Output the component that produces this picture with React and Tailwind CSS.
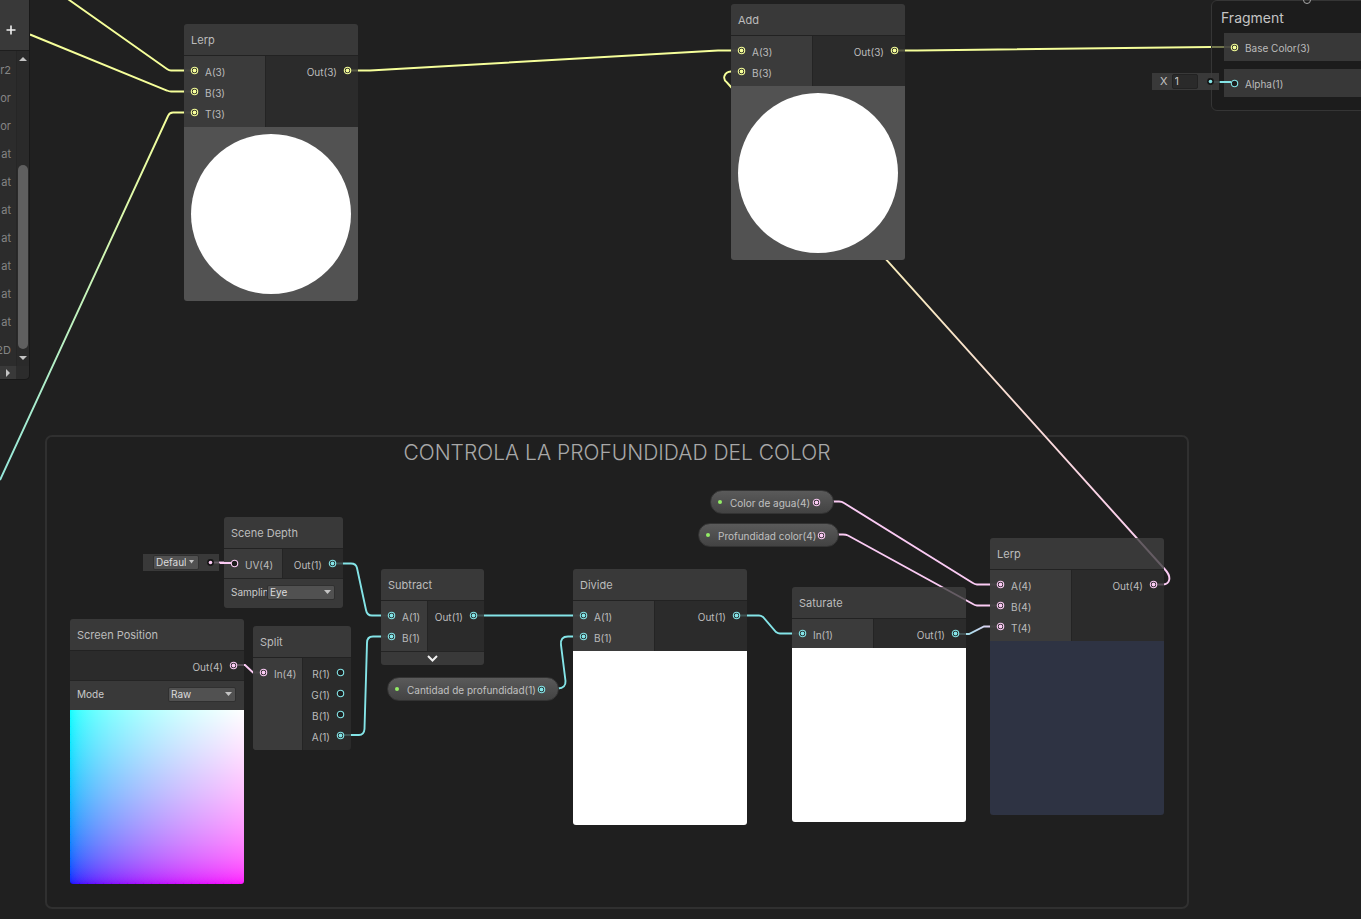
import React from "react";

const AQUA = "#84e4e7";
const PINK = "#fbcbf4";
const YELLOW = "#f6ff9a";

function Port({ color, filled = true, plain = false }) {
  return (
    <svg className="h-[9px] w-[9px] shrink-0" viewBox="0 0 9 9" aria-hidden="true">
      {plain ? (
        <>
          <circle cx="4.5" cy="4.5" r="3.4" fill="#151515" />
          <circle cx="4.5" cy="4.5" r="1.8" fill={color} />
        </>
      ) : (
        <>
          <circle cx="4.5" cy="4.5" r="3.2" fill="#1d1d1d" stroke={color} strokeWidth="1.1" />
          {filled && <circle cx="4.5" cy="4.5" r="1.9" fill={color} />}
        </>
      )}
    </svg>
  );
}

function Input({ label, color, filled }) {
  return (
    <li className="flex h-[21px] items-center gap-1.5 pl-1.5">
      <Port color={color} filled={filled} />
      <span className="mt-[3px]">{label}</span>
    </li>
  );
}

function Output({ label, color, filled }) {
  return (
    <li className="flex h-[21px] items-center justify-end gap-1.5 pr-1.5">
      <span className="mt-[3px]">{label}</span>
      <Port color={color} filled={filled} />
    </li>
  );
}

function Node({ title, className, inputs = [], outputs = [], inputClass = "w-[82px]", children }) {
  return (
    <section className={`absolute overflow-hidden rounded-[3px] text-[10px] text-[#bcbcbc] ${className}`}>
      <h2 className="flex h-[31px] items-center bg-[#404040]/80 px-[7px] pt-0.5 text-[11px]">{title}</h2>
      <div className="flex border-t border-[#222222] bg-[#2e2e2e]/80">
        {inputs.length > 0 && (
          <ul className={`shrink-0 border-r border-[#242424] bg-[#404040]/80 py-1 ${inputClass}`}>
            {inputs.map((p) => (
              <Input key={p.label} {...p} />
            ))}
          </ul>
        )}
        <ul className="grow py-1">
          {outputs.map((p) => (
            <Output key={p.label} {...p} />
          ))}
        </ul>
      </div>
      {children}
    </section>
  );
}

function Dropdown({ id, label, value, className, tight = false }) {
  return (
    <span className={`relative flex h-[15px] shrink-0 ${className}`}>
      <select
        id={id}
        aria-label={label}
        className={`h-full w-full appearance-none overflow-hidden rounded-[2px] border border-[#303030] bg-[#515151] pl-0.5 text-[10px] leading-[13px] text-[#dcdcdc] outline-none ${tight ? "pr-3" : "pr-4"}`}
      >
        <option>{value}</option>
      </select>
      <svg
        className="pointer-events-none absolute top-[5px] right-1 h-1 w-[7px]"
        viewBox="0 0 7 4"
        aria-hidden="true"
      >
        <path d={tight ? "M1 0H6L3.5 3.5Z" : "M0 0H7L3.5 4Z"} fill="#c4c4c4" />
      </svg>
    </span>
  );
}

function OptionRow({ id, label, value }) {
  return (
    <div className="flex h-[30px] items-center border-t border-[#242424] bg-[#404040]/80 pr-2 pb-0.5 pl-[7px]">
      <label htmlFor={id} className="min-w-0 grow whitespace-nowrap text-[#cacaca]">
        {label}
      </label>
      <Dropdown id={id} value={value} className="w-[68px]" />
    </div>
  );
}

function SpherePreview() {
  return (
    <div className="h-[174px] bg-[#525252] p-[7px]">
      <div className="h-full w-full rounded-full bg-white" />
    </div>
  );
}

function PropertyPill({ label, color, className }) {
  return (
    <div
      className={`absolute flex h-[24px] items-center rounded-full border border-[#333333] bg-linear-to-b from-[#5a5a5a] to-[#434343] pr-3 pl-[7px] text-[10px] whitespace-nowrap text-[#c0c0c0] ${className}`}
    >
      <span className="mr-2 h-1 w-1 rounded-full bg-[#93ed66]" />
      <span className="mt-[3px] grow">{label}</span>
      <Port color={color} />
    </div>
  );
}

function Edges() {
  return (
    <svg className="absolute inset-0 h-full w-full" fill="none" strokeWidth="1.9" aria-hidden="true">
      <defs>
        <linearGradient id="aqua-yellow" gradientUnits="userSpaceOnUse" x1="-30" y1="545" x2="172" y2="112">
          <stop offset="0" stopColor={AQUA} />
          <stop offset="1" stopColor={YELLOW} />
        </linearGradient>
        <linearGradient id="yellow-pink" gradientUnits="userSpaceOnUse" x1="741" y1="72" x2="1153" y2="584">
          <stop offset="0" stopColor={YELLOW} />
          <stop offset="1" stopColor={PINK} />
        </linearGradient>
        <linearGradient id="aqua-pink" gradientUnits="userSpaceOnUse" x1="955" y1="634" x2="1000" y2="627">
          <stop offset="0" stopColor={AQUA} />
          <stop offset="1" stopColor={PINK} />
        </linearGradient>
      </defs>
      <g stroke={YELLOW}>
        <path d="M65 -3L167 69Q169 70.500 171 70.500H194" />
        <path d="M30 34.500L167 90.500Q169 91.500 171 91.500H194" />
        <path d="M347 70.500H370L718 50.500H741" />
        <path d="M894 50.500H917L1211 47H1234" />
      </g>
      <path stroke="url(#aqua-yellow)" d="M0 480L168 116Q169.500 112.500 173 112.500H194" />
      <path
        stroke="url(#yellow-pink)"
        d="M741 71.500H731C724 72 722 79 727 82.500L731 87L1165 569.500C1172 577 1170 584 1163 584.500H1153"
      />
      <g stroke={PINK}>
        <path d="M816 501.500H839Q842 501.500 844 503L972 582.500Q975 584.500 977 584.500H1000" />
        <path d="M822 534.500H843Q846 534.500 848 535.500L972 603.500Q975 605.500 977 605.500H1000" />
        <path d="M233 665H245L253 672.500H263" />
        <path d="M211 562.500H234" />
      </g>
      <g stroke={AQUA}>
        <path d="M332 563.500H351Q356 563.500 357 568L366 610Q367 615.500 372 615.500H391" />
        <path d="M340 735H359Q364 735 364.500 729L367 643Q367 636.500 373 636.500H391" />
        <path d="M473 615.500H584" />
        <path d="M542 688.500H558Q566 688 565.500 681L561 645Q560 636.500 568 636.500H584" />
        <path d="M737 615.500H759Q761 615.500 763 617L776 632Q778 633.500 780 633.500H802" />
        <path d="M1210 82H1234" />
      </g>
      <path stroke="url(#aqua-pink)" d="M955 634H969L984 626.500H1000" />
    </svg>
  );
}

function DefaultValueEdges() {
  return (
    <svg
      className="pointer-events-none absolute inset-0 h-full w-full"
      fill="none"
      strokeWidth="2"
      aria-hidden="true"
    >
      <path stroke={PINK} d="M220 563H231" />
      <path stroke={AQUA} d="M1220 82H1231" />
    </svg>
  );
}

const propertyTypes = ["r2", "or", "or", "at", "at", "at", "at", "at", "at", "at", "2D"];

function Blackboard() {
  return (
    <aside className="absolute top-0 left-0 w-[30px] overflow-hidden rounded-br-[5px] border-r border-b border-[#181818] bg-[#2c2c2c]">
      <header className="flex h-[51px] items-center border-b border-[#1e1e1e] bg-[#393939]">
        <button type="button" aria-label="Add property" className="mt-2.5 ml-1.5 flex">
          <svg className="h-[10px] w-[10px]" viewBox="0 0 10 10" aria-hidden="true">
            <path d="M5 0.500V9.500M0.500 5H9.500" stroke="#f0f0f0" strokeWidth="1.600" />
          </svg>
        </button>
      </header>
      <div className="flex">
        <ul className="w-4 pt-[5px] pb-0.5 text-[11px] text-[#858585]">
          {propertyTypes.map((t, i) => (
            <li key={i} className="flex h-7 items-center justify-end pr-[5px]">
              {t}
            </li>
          ))}
        </ul>
        <div className="flex w-[13px] flex-col items-center border-l border-[#262626] bg-[#2a2a2a]">
          <svg className="mt-1.5 h-1 w-2" viewBox="0 0 8 4" aria-hidden="true">
            <path d="M4 0L8 4H0Z" fill="#c4c4c4" />
          </svg>
          <div className="mt-[104px] w-[10px] grow rounded-full bg-[#5f5f5f]" />
          <svg className="mt-[7px] mb-1.5 h-1 w-2" viewBox="0 0 8 4" aria-hidden="true">
            <path d="M0 0H8L4 4Z" fill="#c4c4c4" />
          </svg>
        </div>
      </div>
      <div className="flex h-[13px] w-4 items-center justify-end bg-[#393939] pr-1.5">
        <svg className="h-2 w-1" viewBox="0 0 4 8" aria-hidden="true">
          <path d="M0 0L4 4L0 8Z" fill="#c4c4c4" />
        </svg>
      </div>
    </aside>
  );
}

function FragmentStack() {
  return (
    <section className="absolute top-0 -right-2 left-[1211px] rounded-md border border-[#353535] bg-[#1b1b1b]/60 pt-1.5 pb-[13px] pl-3 text-[10px] text-[#bcbcbc]">
      <svg className="absolute -top-1.5 left-[90px] h-[10px] w-[10px]" viewBox="0 0 10 10" aria-hidden="true">
        <circle cx="5" cy="5" r="3.500" fill="none" stroke="#a8a8a8" />
      </svg>
      <h2 className="-ml-[3px] text-sm leading-[22px] text-[#c4c4c4]">Fragment</h2>
      <ul className="mt-1 flex flex-col gap-2">
        <li className="flex h-7 items-center gap-1.5 bg-[#404040]/80 pl-1.5">
          <Port color={YELLOW} />
          <span className="mt-[3px]">Base Color(3)</span>
        </li>
        <li className="flex h-7 items-center gap-1.5 bg-[#404040]/80 pl-1.5">
          <Port color={AQUA} filled={false} />
          <span className="mt-[3px]">Alpha(1)</span>
        </li>
      </ul>
    </section>
  );
}

function port(label, color, filled = true) {
  return { label, color, filled };
}

export default function App() {
  return (
    <main className="relative min-h-screen w-full overflow-hidden bg-[#202020] font-['Inter',sans-serif]">
      <section className="absolute top-[435px] left-[45px] h-[474px] w-[1144px] rounded-[7px] border-2 border-[#303030] bg-[#1f1f1f]">
        <h1 className="text-center text-[21px] leading-8 font-light text-[#a8a8a8]">
          CONTROLA LA PROFUNDIDAD DEL COLOR
        </h1>
      </section>

      <Edges />

      <Node
        title="Lerp"
        className="top-[24px] left-[184px] w-[174px]"
        inputs={[port("A(3)", YELLOW), port("B(3)", YELLOW), port("T(3)", YELLOW)]}
        outputs={[port("Out(3)", YELLOW)]}
      >
        <SpherePreview />
      </Node>

      <Node
        title="Add"
        className="top-[4px] left-[731px] w-[174px]"
        inputs={[port("A(3)", YELLOW), port("B(3)", YELLOW)]}
        outputs={[port("Out(3)", YELLOW)]}
      >
        <SpherePreview />
      </Node>

      <Node
        title="Scene Depth"
        className="top-[517px] left-[224px] w-[119px]"
        inputClass="w-[59px]"
        inputs={[port("UV(4)", PINK, false)]}
        outputs={[port("Out(1)", AQUA)]}
      >
        <OptionRow id="sampling" label="Samplin" value="Eye" />
      </Node>

      <Node title="Screen Position" className="top-[619px] left-[70px] w-[174px]" outputs={[port("Out(4)", PINK)]}>
        <OptionRow id="mode" label="Mode" value="Raw" />
        <svg className="block h-[174px] w-full" viewBox="0 0 174 174" preserveAspectRatio="none" aria-hidden="true">
          <defs>
            <filter id="uv-gamma" x="0" y="0" width="1" height="1" colorInterpolationFilters="sRGB">
              <feComponentTransfer>
                <feFuncR type="gamma" exponent="0.4545" />
                <feFuncG type="gamma" exponent="0.4545" />
              </feComponentTransfer>
            </filter>
            <linearGradient id="uv-x">
              <stop offset="0" stopColor="#00f" />
              <stop offset="1" stopColor="#f0f" />
            </linearGradient>
            <linearGradient id="uv-y" x1="0" y1="0" x2="0" y2="1">
              <stop offset="0" stopColor="#0f0" />
              <stop offset="1" stopColor="#000" />
            </linearGradient>
          </defs>
          <g filter="url(#uv-gamma)">
            <rect width="174" height="174" fill="url(#uv-x)" />
            <rect width="174" height="174" fill="url(#uv-y)" className="mix-blend-screen" />
          </g>
        </svg>
      </Node>

      <Node
        title="Split"
        className="top-[626px] left-[253px] w-[98px]"
        inputClass="w-[50px]"
        inputs={[port("In(4)", PINK)]}
        outputs={[port("R(1)", AQUA, false), port("G(1)", AQUA, false), port("B(1)", AQUA, false), port("A(1)", AQUA)]}
      />

      <Node
        title="Subtract"
        className="top-[569px] left-[381px] w-[103px]"
        inputClass="w-[47px]"
        inputs={[port("A(1)", AQUA), port("B(1)", AQUA)]}
        outputs={[port("Out(1)", AQUA)]}
      >
        <button
          type="button"
          aria-label="Expand preview"
          className="flex h-[14px] w-full items-center justify-center border-t border-[#242424] bg-[#404040]/80"
        >
          <svg className="h-[7px] w-[11px]" viewBox="0 0 11 7" aria-hidden="true">
            <path d="M1 1L5.500 5.500L10 1" fill="none" stroke="#f0f0f0" strokeWidth="2" />
          </svg>
        </button>
      </Node>

      <Node
        title="Divide"
        className="top-[569px] left-[573px] w-[174px]"
        inputs={[port("A(1)", AQUA), port("B(1)", AQUA)]}
        outputs={[port("Out(1)", AQUA)]}
      >
        <div className="h-[174px] bg-white" />
      </Node>

      <Node
        title="Saturate"
        className="top-[587px] left-[792px] w-[174px]"
        inputs={[port("In(1)", AQUA)]}
        outputs={[port("Out(1)", AQUA)]}
      >
        <div className="h-[174px] bg-white" />
      </Node>

      <Node
        title="Lerp"
        className="top-[538px] left-[990px] w-[174px]"
        inputs={[port("A(4)", PINK), port("B(4)", PINK), port("T(4)", PINK)]}
        outputs={[port("Out(4)", PINK)]}
      >
        <div className="h-[174px] bg-[#2e3343]" />
      </Node>

      <PropertyPill label="Color de agua(4)" color={PINK} className="top-[490px] left-[710px] w-[124px]" />
      <PropertyPill label="Profundidad color(4)" color={PINK} className="top-[523px] left-[698px] w-[141px]" />
      <PropertyPill label="Cantidad de profundidad(1)" color={AQUA} className="top-[677px] left-[387px] w-[172px]" />

      <div className="absolute top-[554px] left-[143px] flex h-[17px] w-[76px] items-center justify-between bg-[#404040]/80 pr-1 pl-2.5">
        <Dropdown label="UV" value="Default" className="w-[46px]" tight />
        <Port color={PINK} plain />
      </div>

      <FragmentStack />

      <div className="absolute top-[73px] left-[1152px] flex h-[17px] w-[67px] items-center bg-[#404040]/80 pr-1 pl-2 text-[11px] text-[#c4c4c4]">
        <label htmlFor="alpha-x">X</label>
        <input
          id="alpha-x"
          type="text"
          defaultValue="1"
          className="ml-1 h-[15px] w-[26px] rounded-[2px] border border-[#222222] bg-[#2a2a2a] px-0.5 outline-none"
        />
        <span className="ml-auto flex">
          <Port color={AQUA} plain />
        </span>
      </div>

      <DefaultValueEdges />
      <Blackboard />
    </main>
  );
}
